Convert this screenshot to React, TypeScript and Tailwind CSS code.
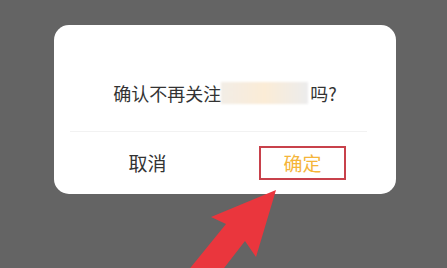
export default function App() {
  return (
    <div
      className="relative w-[447px] h-[268px] overflow-hidden bg-[#646464] pt-[25px] pl-[54px]"
      style={{ fontFamily: '"Noto Sans CJK SC", "Noto Sans", sans-serif' }}
    >
      {/* dialog */}
      <div className="w-[342px] h-[169px] bg-white rounded-[15px] flex flex-col">
        <div className="h-[106px] flex items-center justify-center pt-[30px] text-[18px] text-[#333] leading-none">
          <span>确认不再关注</span>
          <span className="inline-block w-[87px] h-[22px] bg-gradient-to-r from-[#f2ede6] via-[#fbecd6] to-[#ececec] blur-[1px]" />
          <span className="ml-[2px]">吗?</span>
        </div>
        <div className="ml-[16px] mr-[29px] h-px bg-[#f2f2f2]" />
        <div className="flex flex-1 px-4">
          <div className="flex-1 flex items-center justify-center text-[19px] text-[#333]">取消</div>
          <div className="flex-1 flex items-center justify-center">
            <div className="w-[87px] h-[34px] border-2 border-[#c8414b] flex items-center justify-center text-[19px] text-[#f5b53a]">
              确定
            </div>
          </div>
        </div>
      </div>

      {/* annotation arrow */}
      <svg className="absolute left-0 top-0" width="447" height="268" viewBox="0 0 447 268">
        <polygon
          points="276,190 256,257 245,241 221,272 187,272 226,224 211,217"
          fill="#ea363d"
        />
      </svg>
    </div>
  )
}
